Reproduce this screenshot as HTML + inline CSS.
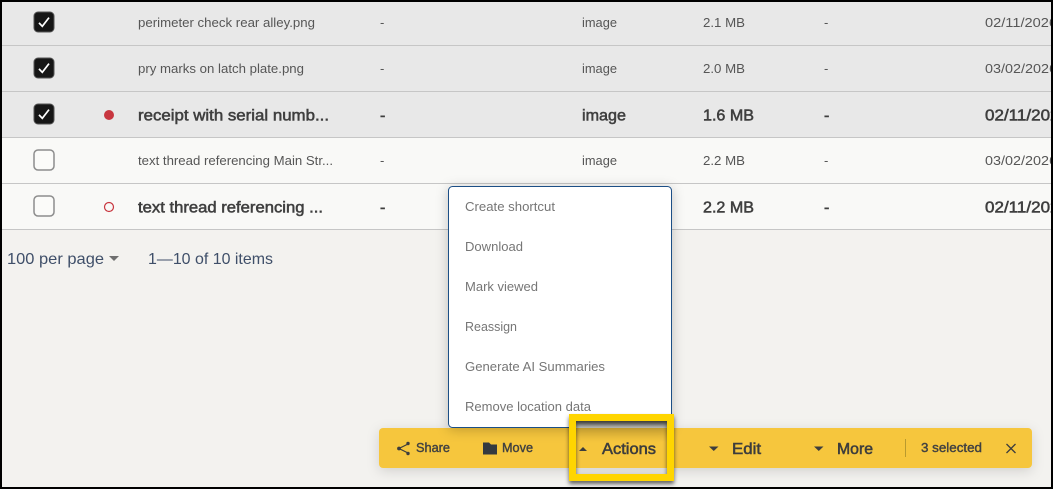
<!DOCTYPE html>
<html lang="en"><head><meta charset="utf-8"><title>Files</title>
<style>
html,body{margin:0;padding:0;background:#000;width:1053px;height:489px;overflow:hidden}
svg{display:block}
text{font-family:"Liberation Sans",sans-serif;fill:#565656;font-size:13px}
.b{font-weight:normal;font-size:16px;fill:#3f3f3f;stroke:#3f3f3f;stroke-width:.55px}
.m{fill:#767676;font-size:13px}
.t{font-size:13px;fill:#414141;stroke:#414141;stroke-width:.4px}
.T{font-size:16px;fill:#3d3d3d;stroke:#3d3d3d;stroke-width:.55px}
.f{font-size:16px;fill:#3f4f69}
</style></head><body>
<svg width="1053" height="489" viewBox="0 0 1053 489" xmlns="http://www.w3.org/2000/svg">
<defs>
<clipPath id="c"><rect x="2" y="2" width="1049" height="485"/></clipPath>
<linearGradient id="gt" x1="0" y1="0" x2="0" y2="1"><stop offset="0" stop-color="#8c8c87"/><stop offset="1" stop-color="#b9b9b2"/></linearGradient>
<linearGradient id="gy" x1="0" y1="0" x2="0" y2="1"><stop offset="0" stop-color="#000" stop-opacity=".1"/><stop offset="1" stop-color="#000" stop-opacity="0"/></linearGradient>
<filter id="s1" x="-20%" y="-20%" width="140%" height="140%"><feDropShadow dx="0" dy="2" stdDeviation="6" flood-color="#000" flood-opacity=".22"/></filter>
<filter id="s2" x="-10%" y="-40%" width="120%" height="200%"><feDropShadow dx="0" dy="3" stdDeviation="6" flood-color="#000" flood-opacity=".14"/></filter>
<filter id="s3" x="-20%" y="-20%" width="140%" height="140%"><feDropShadow dx="0" dy="3" stdDeviation="2" flood-color="#000" flood-opacity=".6"/></filter>
<g id="chk"><rect x="-10" y="-10" width="20" height="20" rx="4" fill="#161616" stroke="#555" stroke-width="1"/><path d="M-5 .9 L-1.7 4.3 L5 -4.4" fill="none" stroke="#fff" stroke-width="1.7"/></g>
<g id="unc"><rect x="-10" y="-10" width="20" height="20" rx="4" fill="#fbfbf9" stroke="#8d8d8d" stroke-width="1.5"/></g>
</defs>
<g clip-path="url(#c)">
<rect x="0" y="0" width="1053" height="489" fill="#f3f2ef"/>
<rect x="0" y="0" width="1053" height="137" fill="#e8e8e8"/>
<rect x="0" y="138" width="1053" height="91" fill="#f9f9f7"/>
<g fill="#c6c6c6">
<rect x="0" y="45" width="1053" height="1"/><rect x="0" y="91" width="1053" height="1"/><rect x="0" y="137" width="1053" height="1"/><rect x="0" y="183" width="1053" height="1"/><rect x="0" y="229" width="1053" height="1"/>
</g>

<use href="#chk" x="44" y="22"/><use href="#chk" x="44" y="68"/><use href="#chk" x="44" y="114"/>
<use href="#unc" x="44" y="160"/><use href="#unc" x="44" y="206"/>
<circle cx="109" cy="115" r="5" fill="#c8363f"/>
<circle cx="109" cy="207" r="4.5" fill="none" stroke="#c8363f" stroke-width="1.2"/>

<text x="138" y="27" textLength="177" lengthAdjust="spacingAndGlyphs">perimeter check rear alley.png</text>
<text x="380" y="27">-</text><text x="582" y="27" textLength="35" lengthAdjust="spacingAndGlyphs">image</text><text x="703" y="27" textLength="42" lengthAdjust="spacingAndGlyphs">2.1 MB</text><text x="824" y="27">-</text><text x="985" y="27" textLength="72" lengthAdjust="spacingAndGlyphs">02/11/2026</text>

<text x="138" y="73" textLength="166" lengthAdjust="spacingAndGlyphs">pry marks on latch plate.png</text>
<text x="380" y="73">-</text><text x="582" y="73" textLength="35" lengthAdjust="spacingAndGlyphs">image</text><text x="703" y="73" textLength="42" lengthAdjust="spacingAndGlyphs">2.0 MB</text><text x="824" y="73">-</text><text x="985" y="73" textLength="72" lengthAdjust="spacingAndGlyphs">03/02/2026</text>

<text class="b" x="138" y="120.5" textLength="191" lengthAdjust="spacingAndGlyphs">receipt with serial numb...</text>
<text class="b" x="380" y="120.5">-</text><text class="b" x="582" y="120.5" textLength="44" lengthAdjust="spacingAndGlyphs">image</text><text class="b" x="703" y="120.5" textLength="51" lengthAdjust="spacingAndGlyphs">1.6 MB</text><text class="b" x="824" y="120.5">-</text><text class="b" x="985" y="120.5" textLength="84" lengthAdjust="spacingAndGlyphs">02/11/2026</text>

<text x="138" y="165" textLength="195" lengthAdjust="spacingAndGlyphs">text thread referencing Main Str...</text>
<text x="380" y="165">-</text><text x="582" y="165" textLength="35" lengthAdjust="spacingAndGlyphs">image</text><text x="703" y="165" textLength="42" lengthAdjust="spacingAndGlyphs">2.2 MB</text><text x="824" y="165">-</text><text x="985" y="165" textLength="72" lengthAdjust="spacingAndGlyphs">03/02/2026</text>

<text class="b" x="138" y="212.5" textLength="185" lengthAdjust="spacingAndGlyphs">text thread referencing ...</text>
<text class="b" x="380" y="212.5">-</text><text class="b" x="703" y="212.5" textLength="51" lengthAdjust="spacingAndGlyphs">2.2 MB</text><text class="b" x="824" y="212.5">-</text><text class="b" x="985" y="212.5" textLength="84" lengthAdjust="spacingAndGlyphs">02/11/2026</text>

<text class="f" x="7" y="264" textLength="97" lengthAdjust="spacingAndGlyphs">100 per page</text>
<path d="M109 256 H119 L114 261 Z" fill="#6f6f6f"/>
<text class="f" x="148" y="264" textLength="125" lengthAdjust="spacingAndGlyphs">1—10 of 10 items</text>

<rect x="379" y="428" width="653" height="40" rx="4" fill="#f6c63e" filter="url(#s2)"/>

<rect x="448.5" y="186.5" width="223" height="241" rx="4" fill="#fff" stroke="#1d4f86" stroke-width="1" filter="url(#s1)"/>
<text class="m" x="465" y="211" textLength="90" lengthAdjust="spacingAndGlyphs">Create shortcut</text>
<text class="m" x="465" y="251" textLength="58" lengthAdjust="spacingAndGlyphs">Download</text>
<text class="m" x="465" y="291" textLength="73" lengthAdjust="spacingAndGlyphs">Mark viewed</text>
<text class="m" x="465" y="331" textLength="52" lengthAdjust="spacingAndGlyphs">Reassign</text>
<text class="m" x="465" y="371" textLength="140" lengthAdjust="spacingAndGlyphs">Generate AI Summaries</text>
<text class="m" x="465" y="411" textLength="126" lengthAdjust="spacingAndGlyphs">Remove location data</text>

<rect x="576" y="421" width="91" height="7" fill="url(#gt)"/>
<rect x="576" y="428" width="91" height="14" fill="url(#gy)"/>
<rect x="576" y="468" width="91" height="6" fill="#dcdcd9"/>

<g fill="#3d3d3d" stroke="#3d3d3d">
<path d="M408 444 L399 448.5 L408 453" fill="none" stroke-width="1.2"/>
<circle cx="408" cy="443.5" r="1.7" stroke="none"/><circle cx="399" cy="448.5" r="1.9" stroke="none"/><circle cx="408" cy="453.5" r="1.7" stroke="none"/>
</g>
<text class="t" x="416" y="452" textLength="34" lengthAdjust="spacingAndGlyphs">Share</text>
<path d="M483 442.5 H489 L491 444.5 H497 V454.5 H483 Z" fill="#343a40"/>
<text class="t" x="502" y="452" textLength="31" lengthAdjust="spacingAndGlyphs">Move</text>
<path d="M579 451 L583 447 L587 451 Z" fill="#3d3d3d"/>
<text class="T" x="602" y="454" textLength="54" lengthAdjust="spacingAndGlyphs">Actions</text>
<path d="M709 446.5 H718.5 L713.75 451 Z" fill="#3d3d3d"/>
<text class="T" x="732" y="454" textLength="29" lengthAdjust="spacingAndGlyphs">Edit</text>
<path d="M814 446.5 H823.5 L818.75 451 Z" fill="#3d3d3d"/>
<text class="T" x="837" y="454" textLength="36" lengthAdjust="spacingAndGlyphs">More</text>
<rect x="905" y="439" width="1" height="18" fill="#b99a2e"/>
<text class="t" x="921" y="452" textLength="61" lengthAdjust="spacingAndGlyphs">3 selected</text>
<path d="M1006.5 444 L1015.5 453 M1015.5 444 L1006.5 453" stroke="#3d3d3d" stroke-width="1.3" fill="none"/>

<rect x="572.5" y="417.5" width="98" height="60" fill="none" stroke="#ffd500" stroke-width="7" filter="url(#s3)"/>
</g>
</svg>
</body></html>
